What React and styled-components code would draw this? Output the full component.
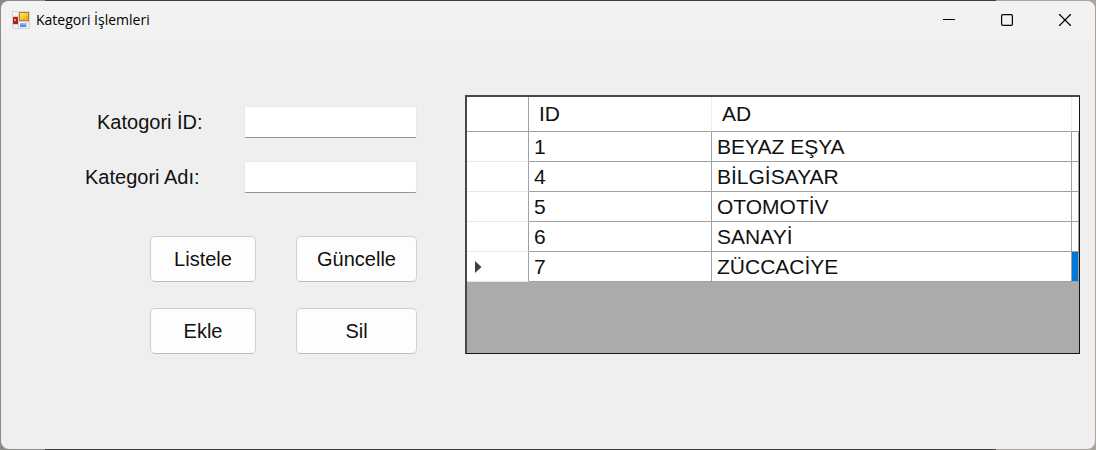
import React from "react";
import styled, { createGlobalStyle } from "styled-components";

const GlobalStyle = createGlobalStyle`
  * { box-sizing: border-box; }
  body {
    margin: 0;
    background: linear-gradient(to right, #8d8b88 0 45px, #3c3a3d 45px calc(100% - 100px), #a9a59d calc(100% - 100px));
    color: #111;
    font-family: "Liberation Sans", Arial, sans-serif;
    font-size: 20px;
    line-height: 24px;
  }
`;

const Desktop = styled.div`
  display: flex;
  min-height: 100vh;
  padding: 1px;
`;

const Window = styled.div`
  flex: 1;
  min-width: 0;
  background: #efefef;
  border-radius: 8px;
  overflow: hidden;
`;

const TitleBar = styled.header`
  display: flex;
  align-items: center;
  height: 38px;
  padding: 0 1px 0 11px;
  background: #f2f2f2;
`;

const Title = styled.h1`
  flex: 1;
  margin: 0 0 0 6px;
  font: 400 14px/20px "Open Sans", "Noto Sans", sans-serif;
  color: #000;
`;

const CaptionButton = styled.button`
  display: grid;
  place-items: center;
  width: 58px;
  height: 38px;
  padding: 0;
  border: 0;
  background: none;
`;

const Content = styled.main`
  display: flex;
  align-items: flex-start;
  gap: 48px;
  padding: 56px 15px 56px 84px;
`;

const Form = styled.form`
  flex: none;
  display: flex;
  flex-direction: column;
  gap: 23px;
  margin: 0;
  padding-top: 11px;
`;

const Field = styled.div`
  display: flex;
  align-items: center;
  justify-content: space-between;
  width: 332px;
`;

const Label = styled.label`
  padding-left: ${(p) => p.$indent || 0}px;
`;

const TextBox = styled.input`
  width: 173px;
  height: 32px;
  padding: 0 6px;
  border: 1px solid #e9e9e9;
  border-bottom: 1px solid #949494;
  border-radius: 2px;
  background: #fff;
  font: inherit;
  outline: none;
`;

const Actions = styled.div`
  display: grid;
  grid-template-columns: 106px 121px;
  justify-content: end;
  gap: 26px 40px;
  margin-top: 20px;
`;

const Button = styled.button`
  height: 46px;
  padding: 0;
  border: 1px solid #d0d0d0;
  border-bottom-color: #bdbdbd;
  border-radius: 5px;
  background: #fdfdfd;
  color: inherit;
  font: inherit;
`;

const GridFrame = styled.div`
  flex: 1;
  min-width: 0;
  min-height: 259px;
  border: 1px solid #151515;
  border-top: 2px solid #484848;
  border-left: 2px solid #484848;
  background: #ababab;
`;

const DataGrid = styled.table`
  width: 100%;
  table-layout: fixed;
  border-collapse: separate;
  border-spacing: 0;
  background: #fff;
  font-size: 21px;
  line-height: 24px;
`;

const Column = styled.col`
  width: ${(p) => p.$width};
`;

const HeaderCell = styled.th`
  height: 35px;
  padding: 0 10px;
  border-right: 1px solid ${(p) => (p.$strong ? "#a0a0a0" : "#ececec")};
  border-bottom: 1px solid #a0a0a0;
  font-weight: 400;
  text-align: left;
  &:last-child {
    padding: 0;
    border-right: 0;
  }
`;

const RowHeader = styled.th`
  height: 30px;
  padding: 0 8px;
  border-right: 1px solid #a0a0a0;
  border-bottom: 1px solid #e6e6e6;
  text-align: left;
  svg { display: block; }
`;

const Cell = styled.td`
  height: 30px;
  padding: 0 5px;
  border-right: 1px solid #a0a0a0;
  border-bottom: 1px solid #a0a0a0;
  background: ${(p) => (p.$selected ? "#0078d7" : "#fff")};
  &:last-child { padding: 0; }
`;

const AppIcon = () => (
  <svg width="18" height="18" viewBox="0 0 18 18" aria-hidden="true">
    <defs>
      <linearGradient id="gold" x1="0" y1="0" x2="1" y2="1">
        <stop offset="0" stopColor="#ffe68a" />
        <stop offset="1" stopColor="#e9a400" />
      </linearGradient>
      <linearGradient id="blue" x1="0" y1="0" x2="0" y2="1">
        <stop offset="0" stopColor="#9cc4ff" />
        <stop offset="1" stopColor="#3d7ae0" />
      </linearGradient>
    </defs>
    <rect width="18" height="18" fill="#d3d3d3" />
    <rect x="1" y="1" width="5" height="4" fill="#f4f4f4" />
    <rect x="1" y="14" width="5" height="3" fill="#f0f0f0" />
    <rect x="15" y="12" width="2" height="5" fill="#f0f0f0" />
    <rect x="1" y="6" width="5" height="7" fill="#b81f1c" />
    <rect x="2" y="8" width="2" height="2" fill="#ee8c80" />
    <rect x="7" y="1" width="10" height="9" fill="#b88311" />
    <rect x="8" y="2" width="8" height="7" fill="url(#gold)" />
    <rect x="7" y="11" width="7" height="6" fill="#f2f5fa" />
    <rect x="8" y="12" width="6" height="4" fill="url(#blue)" />
  </svg>
);

const rows = [
  [1, "BEYAZ EŞYA"],
  [4, "BİLGİSAYAR"],
  [5, "OTOMOTİV"],
  [6, "SANAYİ"],
  [7, "ZÜCCACİYE"],
];
const currentId = 7;

export default function App() {
  return (
    <>
      <GlobalStyle />
      <Desktop>
        <Window>
          <TitleBar>
            <AppIcon />
            <Title>Kategori İşlemleri</Title>
            <CaptionButton type="button" aria-label="Simge durumuna küçült">
              <svg width="12" height="12" viewBox="0 0 12 12">
                <path d="M0 5.5H12" stroke="#000" />
              </svg>
            </CaptionButton>
            <CaptionButton type="button" aria-label="Ekranı kapla">
              <svg width="12" height="12" viewBox="0 0 12 12">
                <rect x="0.6" y="0.6" width="10.8" height="10.8" rx="1.2" fill="none" stroke="#000" strokeWidth="1.2" />
              </svg>
            </CaptionButton>
            <CaptionButton type="button" aria-label="Kapat">
              <svg width="12" height="12" viewBox="0 0 12 12">
                <path d="M0.5 0.5L11.5 11.5M11.5 0.5L0.5 11.5" stroke="#000" strokeWidth="1.2" strokeLinecap="round" />
              </svg>
            </CaptionButton>
          </TitleBar>
          <Content>
            <Form onSubmit={(e) => e.preventDefault()}>
              <Field>
                <Label htmlFor="category-id" $indent={12}>Katogori İD:</Label>
                <TextBox id="category-id" type="text" />
              </Field>
              <Field>
                <Label htmlFor="category-name">Kategori Adı:</Label>
                <TextBox id="category-name" type="text" />
              </Field>
              <Actions>
                <Button type="button">Listele</Button>
                <Button type="button">Güncelle</Button>
                <Button type="button">Ekle</Button>
                <Button type="button">Sil</Button>
              </Actions>
            </Form>
            <GridFrame>
              <DataGrid>
                <colgroup>
                  <Column $width="62px" />
                  <Column $width="183px" />
                  <Column $width="auto" />
                  <Column $width="7px" />
                </colgroup>
                <thead>
                  <tr>
                    <HeaderCell $strong />
                    <HeaderCell scope="col">ID</HeaderCell>
                    <HeaderCell scope="col">AD</HeaderCell>
                    <HeaderCell />
                  </tr>
                </thead>
                <tbody>
                  {rows.map(([id, name]) => (
                    <tr key={id}>
                      <RowHeader scope="row">
                        {id === currentId && (
                          <svg width="7" height="12" viewBox="0 0 7 12" aria-label="Geçerli satır">
                            <path d="M0 0L6.5 6L0 12Z" fill="#404040" />
                          </svg>
                        )}
                      </RowHeader>
                      <Cell>{id}</Cell>
                      <Cell>{name}</Cell>
                      <Cell $selected={id === currentId} />
                    </tr>
                  ))}
                </tbody>
              </DataGrid>
            </GridFrame>
          </Content>
        </Window>
      </Desktop>
    </>
  );
}
